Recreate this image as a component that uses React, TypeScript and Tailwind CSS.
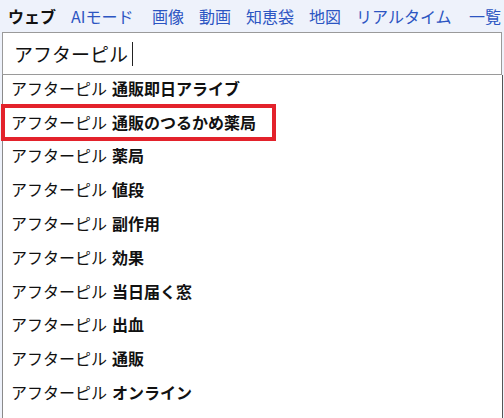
import React from "react";

const tabs: { t: string; w?: string }[] = [
  { t: "AIモード", w: "w-[66px]" },
  { t: "画像" },
  { t: "動画" },
  { t: "知恵袋" },
  { t: "地図" },
  { t: "リアルタイム", w: "w-[98px]" },
  { t: "一覧" },
];
const items = [
  "通販即日アライブ",
  "通販のつるかめ薬局",
  "薬局",
  "値段",
  "副作用",
  "効果",
  "当日届く窓",
  "出血",
  "通販",
  "オンライン",
];

export default function App() {
  return (
    <div
      className="w-[504px] h-[418px] overflow-hidden bg-[#eef2fb] text-black"
      style={{ fontFamily: '"Noto Sans CJK JP", "Noto Sans", sans-serif' }}
    >
      <div className="h-[32px] flex items-center pl-[8px] pb-[1px] gap-[15px] text-[16px] whitespace-nowrap">
        <span className="font-bold text-[#111]">ウェブ</span>
        {tabs.map(({ t, w }) => (
          <span key={t} className={`text-[#2c55c2] shrink-0 ${w ?? ""}`}>
            {t}
          </span>
        ))}
      </div>
      <div className="ml-[2px] w-[500px] h-[43px] bg-white border border-[#9a9a9a] flex items-center pl-[11px]">
        <span className="text-[19px] text-[#111] leading-none">アフターピル</span>
        <span className="ml-[4px] w-[1px] h-[24px] bg-[#222]" />
      </div>
      <div className="relative ml-[2px] w-[501px] h-[400px] bg-white border-l border-l-[#8a8a8a] border-r border-r-[#555]">
        {items.map((s, i) => (
          <div key={i} className="h-[33.8px] flex items-center pl-[8px] pb-[8px] text-[16px] text-[#111] whitespace-nowrap">
            <span>アフターピル</span>
            <span className="font-bold ml-[5px]">{s}</span>
          </div>
        ))}
        <div className="absolute left-[-2px] top-[29px] w-[275px] h-[37px] border-[4px] border-[#e3222b]" />
      </div>
    </div>
  );
}
